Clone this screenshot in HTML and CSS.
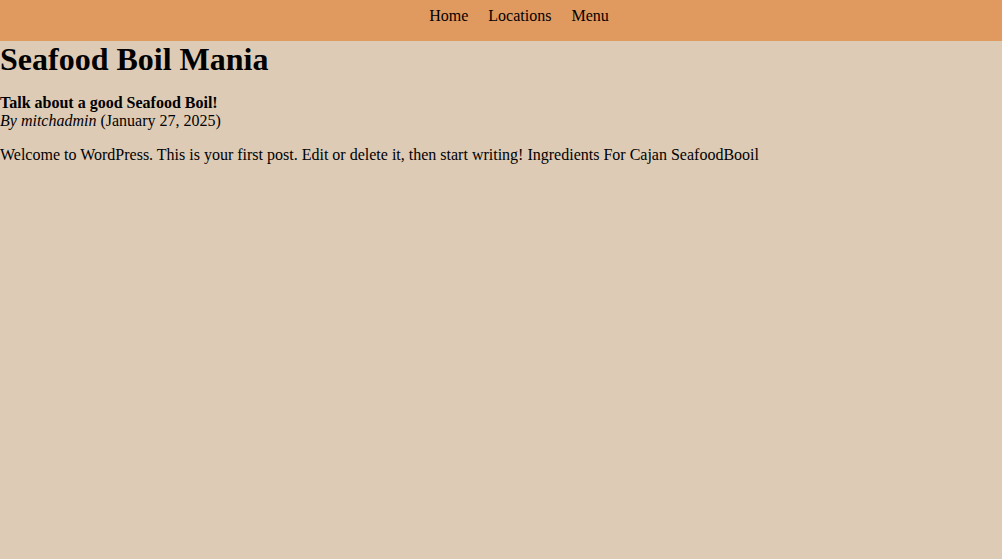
FILE: index.html
```html
<!DOCTYPE html>
<html lang="en">
<head>
<meta charset="utf-8">
<title>Seafood Boil Mania</title>
<link rel="stylesheet" href="styles.css">
</head>
<body>
<header class="site-header">
  <ul class="nav">
    <li><a href="#">Home</a></li>
    <li><a href="#">Locations</a></li>
    <li><a href="#">Menu</a></li>
  </ul>
</header>
<main>
  <h1 class="site-title">Seafood Boil Mania</h1>
  <article class="post">
    <p class="post-meta"><strong class="post-title">Talk about a good Seafood Boil!</strong><br><em>By mitchadmin</em> (January 27, 2025)</p>
    <p class="post-body">Welcome to WordPress. This is your first post. Edit or delete it, then start writing! Ingredients For Cajan SeafoodBooil</p>
  </article>
</main>
</body>
</html>
```
FILE: styles.css
```css
html, body {
  margin: 0;
  padding: 0;
}
body {
  background: #ddcbb6;
  color: #000;
  font-family: "Liberation Serif", "Times New Roman", serif;
  font-size: 16px;
  min-height: 559px;
}
.site-header {
  background: #e0995f;
  height: 41px;
  box-sizing: border-box;
  padding-top: 7px;
}
.nav {
  list-style: none;
  margin: 0;
  padding: 0 0 0 36px;
  display: flex;
  justify-content: center;
  gap: 20px;
}
.nav a {
  color: #000;
  text-decoration: none;
}
.site-title {
  font-size: 32px;
  font-weight: bold;
  margin: 0;
}
.post p {
  margin: 16px 0;
}
```
